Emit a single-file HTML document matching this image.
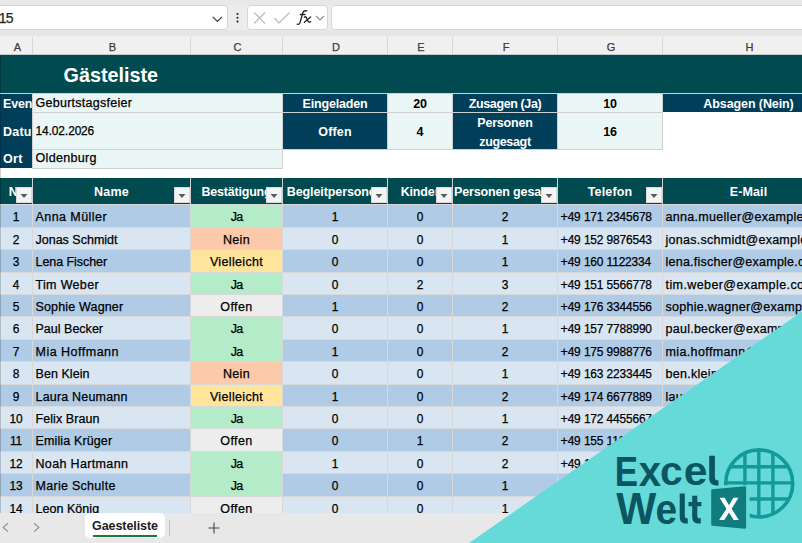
<!DOCTYPE html>
<html><head><meta charset="utf-8"><style>
html,body{margin:0;padding:0;}
body{width:802px;height:543px;overflow:hidden;position:relative;font-family:"Liberation Sans", sans-serif;background:#fff;}
.d{font-size:11.9px;}
.t{-webkit-text-stroke:0.25px currentColor;}
</style></head><body>
<div style="position:absolute;left:0px;top:0px;width:802px;height:36px;background:#ececec;"></div>
<div style="position:absolute;left:0px;top:0px;width:802px;height:5px;background:#e8e8e8;"></div>
<div style="position:absolute;left:0px;top:30px;width:802px;height:6px;background:#e6e6e6;"></div>
<div style="position:absolute;left:-6px;top:5px;width:234px;height:24.5px;background:#ffffff;border:1px solid #d6d6d6;border-radius:4px;box-sizing:border-box;"></div>
<div style="position:absolute;left:0px;top:6px;width:226px;height:23px;overflow:hidden;"><div class="t" style="position:absolute;left:-1.2px;top:5.00px;line-height:14px;font-size:14px;font-weight:400;color:#222;white-space:nowrap;letter-spacing:-0.9px;">15</div></div>
<svg style="position:absolute;left:0;top:0" width="240" height="36" viewBox="0 0 240 36"><path d="M212.8 16.9 L217.4 21.4 L222 16.9" fill="none" stroke="#3a3a3a" stroke-width="1.3"/><circle cx="237.5" cy="14" r="1.05" fill="#222"/><circle cx="237.5" cy="17.8" r="1.05" fill="#222"/><circle cx="237.5" cy="21.6" r="1.05" fill="#222"/></svg>
<div style="position:absolute;left:247px;top:5px;width:81px;height:24.5px;background:#ffffff;border:1px solid #d6d6d6;border-radius:4px;box-sizing:border-box;"></div>
<svg style="position:absolute;left:252px;top:11px" width="16" height="14" viewBox="0 0 16 14"><path d="M2 1.5 L13 12.5 M13 1.5 L2 12.5" fill="none" stroke="#b8b8b8" stroke-width="1.2"/></svg>
<svg style="position:absolute;left:273px;top:11px" width="18" height="14" viewBox="0 0 18 14"><path d="M1.5 7 L6 12 L16.5 1.5" fill="none" stroke="#b8b8b8" stroke-width="1.2"/></svg>
<svg style="position:absolute;left:0;top:0" width="340" height="36" viewBox="0 0 340 36"><g fill="none" stroke="#262626" stroke-width="1.35" stroke-linecap="round"><path d="M297.3 24.2 C298.8 24.9 299.9 23.6 300.5 21.2 L302.6 13.4 C303.2 11.2 304.6 10.3 306.8 10.9"/><path d="M300.4 14.5 H305"/><path d="M304.2 17.2 C305.4 16.3 306.2 16.8 306.8 18.6 L307.9 21 C308.5 22.3 309.5 22.4 310.6 21.6"/><path d="M310.6 16.9 L304.4 22.3"/></g></svg>
<svg style="position:absolute;left:315px;top:15px" width="10" height="7" viewBox="0 0 10 7"><path d="M1 1 L5 5 L9 1" fill="none" stroke="#8a8a8a" stroke-width="1.1"/></svg>
<div style="position:absolute;left:331px;top:5px;width:480px;height:24.5px;background:#ffffff;border:1px solid #d6d6d6;border-radius:4px;box-sizing:border-box;"></div>
<div style="position:absolute;left:0px;top:36px;width:802px;height:19px;background:#f0f0f0;"></div>
<div style="position:absolute;left:1.5px;top:36px;width:32.0px;height:18px;overflow:hidden;"><div class="t" style="position:absolute;left:-500px;width:1032.0px;text-align:center;top:6.00px;line-height:11px;font-size:11px;font-weight:400;color:#3c3c3c;white-space:nowrap;letter-spacing:0px;">A</div></div>
<div style="position:absolute;left:32px;top:37px;width:1px;height:17px;background:#d7d7d7;"></div>
<div style="position:absolute;left:33.5px;top:36px;width:158.0px;height:18px;overflow:hidden;"><div class="t" style="position:absolute;left:-500px;width:1158.0px;text-align:center;top:6.00px;line-height:11px;font-size:11px;font-weight:400;color:#3c3c3c;white-space:nowrap;letter-spacing:0px;">B</div></div>
<div style="position:absolute;left:190px;top:37px;width:1px;height:17px;background:#d7d7d7;"></div>
<div style="position:absolute;left:191.5px;top:36px;width:92.0px;height:18px;overflow:hidden;"><div class="t" style="position:absolute;left:-500px;width:1092.0px;text-align:center;top:6.00px;line-height:11px;font-size:11px;font-weight:400;color:#3c3c3c;white-space:nowrap;letter-spacing:0px;">C</div></div>
<div style="position:absolute;left:282px;top:37px;width:1px;height:17px;background:#d7d7d7;"></div>
<div style="position:absolute;left:283.5px;top:36px;width:105.0px;height:18px;overflow:hidden;"><div class="t" style="position:absolute;left:-500px;width:1105.0px;text-align:center;top:6.00px;line-height:11px;font-size:11px;font-weight:400;color:#3c3c3c;white-space:nowrap;letter-spacing:0px;">D</div></div>
<div style="position:absolute;left:387px;top:37px;width:1px;height:17px;background:#d7d7d7;"></div>
<div style="position:absolute;left:388.5px;top:36px;width:65.0px;height:18px;overflow:hidden;"><div class="t" style="position:absolute;left:-500px;width:1065.0px;text-align:center;top:6.00px;line-height:11px;font-size:11px;font-weight:400;color:#3c3c3c;white-space:nowrap;letter-spacing:0px;">E</div></div>
<div style="position:absolute;left:452px;top:37px;width:1px;height:17px;background:#d7d7d7;"></div>
<div style="position:absolute;left:453.5px;top:36px;width:105.0px;height:18px;overflow:hidden;"><div class="t" style="position:absolute;left:-500px;width:1105.0px;text-align:center;top:6.00px;line-height:11px;font-size:11px;font-weight:400;color:#3c3c3c;white-space:nowrap;letter-spacing:0px;">F</div></div>
<div style="position:absolute;left:557px;top:37px;width:1px;height:17px;background:#d7d7d7;"></div>
<div style="position:absolute;left:558.5px;top:36px;width:105.0px;height:18px;overflow:hidden;"><div class="t" style="position:absolute;left:-500px;width:1105.0px;text-align:center;top:6.00px;line-height:11px;font-size:11px;font-weight:400;color:#3c3c3c;white-space:nowrap;letter-spacing:0px;">G</div></div>
<div style="position:absolute;left:662px;top:37px;width:1px;height:17px;background:#d7d7d7;"></div>
<div style="position:absolute;left:663.5px;top:36px;width:172.0px;height:18px;overflow:hidden;"><div class="t" style="position:absolute;left:-500px;width:1172.0px;text-align:center;top:6.00px;line-height:11px;font-size:11px;font-weight:400;color:#3c3c3c;white-space:nowrap;letter-spacing:0px;">H</div></div>
<div style="position:absolute;left:0px;top:54px;width:802px;height:1px;background:#c8c8c8;"></div>
<div style="position:absolute;left:0px;top:55px;width:802px;height:458px;background:#ffffff;"></div>
<div style="position:absolute;left:0px;top:55px;width:802px;height:38px;background:#004a50;"></div>
<div style="position:absolute;left:33px;top:55px;width:367px;height:38px;overflow:hidden;"><div class="" style="position:absolute;left:30.5px;top:11.00px;line-height:19.8px;font-size:19.8px;font-weight:700;color:#fff;white-space:nowrap;letter-spacing:0px;">Gästeliste</div></div>
<div style="position:absolute;left:0px;top:93px;width:802px;height:1px;background:#d0d0d0;"></div>
<div style="position:absolute;left:33px;top:112px;width:630px;height:1px;background:#d0d0d0;"></div>
<div style="position:absolute;left:33px;top:149px;width:630px;height:1px;background:#d0d0d0;"></div>
<div style="position:absolute;left:33px;top:168px;width:250px;height:1px;background:#d0d0d0;"></div>
<div style="position:absolute;left:0px;top:94px;width:32px;height:18px;background:#003e5a;"></div>
<div style="position:absolute;left:0px;top:94px;width:32px;height:18px;overflow:hidden;"><div class="" style="position:absolute;left:3px;top:4.00px;line-height:12.5px;font-size:12.5px;font-weight:700;color:#fff;white-space:nowrap;letter-spacing:-0.146px;">Event</div></div>
<div style="position:absolute;left:33px;top:94px;width:249px;height:18px;background:#eaf5f5;"></div>
<div style="position:absolute;left:33px;top:94px;width:249px;height:18px;overflow:hidden;"><div class="t" style="position:absolute;left:2.5px;top:3.00px;line-height:12.5px;font-size:12.5px;font-weight:400;color:#000;white-space:nowrap;letter-spacing:0.267px;">Geburtstagsfeier</div></div>
<div style="position:absolute;left:0px;top:112px;width:32px;height:37px;background:#003e5a;"></div>
<div style="position:absolute;left:0px;top:113px;width:32px;height:36px;overflow:hidden;"><div class="" style="position:absolute;left:3px;top:13.00px;line-height:12.5px;font-size:12.5px;font-weight:700;color:#fff;white-space:nowrap;letter-spacing:0.227px;">Datum</div></div>
<div style="position:absolute;left:33px;top:113px;width:249px;height:36px;background:#eaf5f5;"></div>
<div style="position:absolute;left:33px;top:113px;width:249px;height:36px;overflow:hidden;"><div class="t" style="position:absolute;left:2.5px;top:12.00px;line-height:12.5px;font-size:12.5px;font-weight:400;color:#000;white-space:nowrap;letter-spacing:-0.129px;"><span class="d">14</span>.<span class="d">02</span>.<span class="d">2026</span></div></div>
<div style="position:absolute;left:0px;top:149px;width:32px;height:19px;background:#003e5a;"></div>
<div style="position:absolute;left:0px;top:150px;width:32px;height:18px;overflow:hidden;"><div class="" style="position:absolute;left:3px;top:3.00px;line-height:12.5px;font-size:12.5px;font-weight:700;color:#fff;white-space:nowrap;letter-spacing:0.277px;">Ort</div></div>
<div style="position:absolute;left:33px;top:150px;width:249px;height:18px;background:#eaf5f5;"></div>
<div style="position:absolute;left:33px;top:150px;width:249px;height:18px;overflow:hidden;"><div class="t" style="position:absolute;left:2.5px;top:2.00px;line-height:12.5px;font-size:12.5px;font-weight:400;color:#000;white-space:nowrap;letter-spacing:0.314px;">Oldenburg</div></div>
<div style="position:absolute;left:32px;top:94px;width:1px;height:75px;background:#d0d0d0;"></div>
<div style="position:absolute;left:282px;top:94px;width:1px;height:75px;background:#d0d0d0;"></div>
<div style="position:absolute;left:283px;top:94px;width:104px;height:18px;background:#003e5a;"></div>
<div style="position:absolute;left:283px;top:94px;width:104px;height:18px;overflow:hidden;"><div class="" style="position:absolute;left:-500px;width:1104px;text-align:center;top:4.00px;line-height:12.5px;font-size:12.5px;font-weight:700;color:#fff;white-space:nowrap;letter-spacing:-0.178px;">Eingeladen</div></div>
<div style="position:absolute;left:388px;top:94px;width:64px;height:18px;background:#eaf5f5;"></div>
<div style="position:absolute;left:388px;top:94px;width:64px;height:18px;overflow:hidden;"><div class="" style="position:absolute;left:-500px;width:1064px;text-align:center;top:4.00px;line-height:12.5px;font-size:12.5px;font-weight:700;color:#000;white-space:nowrap;letter-spacing:-0.152px;">20</div></div>
<div style="position:absolute;left:453px;top:94px;width:104px;height:18px;background:#003e5a;"></div>
<div style="position:absolute;left:453px;top:94px;width:104px;height:18px;overflow:hidden;"><div class="" style="position:absolute;left:-500px;width:1104px;text-align:center;top:4.00px;line-height:12.5px;font-size:12.5px;font-weight:700;color:#fff;white-space:nowrap;letter-spacing:-0.379px;">Zusagen (Ja)</div></div>
<div style="position:absolute;left:558px;top:94px;width:104px;height:18px;background:#eaf5f5;"></div>
<div style="position:absolute;left:558px;top:94px;width:104px;height:18px;overflow:hidden;"><div class="" style="position:absolute;left:-500px;width:1104px;text-align:center;top:4.00px;line-height:12.5px;font-size:12.5px;font-weight:700;color:#000;white-space:nowrap;letter-spacing:-0.152px;">10</div></div>
<div style="position:absolute;left:663px;top:94px;width:171px;height:18px;background:#003e5a;"></div>
<div style="position:absolute;left:663px;top:94px;width:171px;height:18px;overflow:hidden;"><div class="" style="position:absolute;left:-500px;width:1171px;text-align:center;top:4.00px;line-height:12.5px;font-size:12.5px;font-weight:700;color:#fff;white-space:nowrap;letter-spacing:-0.092px;">Absagen (Nein)</div></div>
<div style="position:absolute;left:283px;top:113px;width:104px;height:36px;background:#003e5a;"></div>
<div style="position:absolute;left:283px;top:113px;width:104px;height:36px;overflow:hidden;"><div class="" style="position:absolute;left:-500px;width:1104px;text-align:center;top:13.00px;line-height:12.5px;font-size:12.5px;font-weight:700;color:#fff;white-space:nowrap;letter-spacing:0.153px;">Offen</div></div>
<div style="position:absolute;left:388px;top:113px;width:64px;height:36px;background:#eaf5f5;"></div>
<div style="position:absolute;left:388px;top:113px;width:64px;height:36px;overflow:hidden;"><div class="" style="position:absolute;left:-500px;width:1064px;text-align:center;top:13.00px;line-height:12.5px;font-size:12.5px;font-weight:700;color:#000;white-space:nowrap;letter-spacing:-0.152px;">4</div></div>
<div style="position:absolute;left:453px;top:113px;width:104px;height:36px;background:#003e5a;"></div>
<div style="position:absolute;left:453px;top:113px;width:104px;height:36px;overflow:hidden;"><div class="" style="position:absolute;left:-500px;width:1104px;text-align:center;top:4.00px;line-height:12.5px;font-size:12.5px;font-weight:700;color:#fff;white-space:nowrap;letter-spacing:-0.183px;">Personen</div></div>
<div style="position:absolute;left:453px;top:113px;width:104px;height:36px;overflow:hidden;"><div class="" style="position:absolute;left:-500px;width:1104px;text-align:center;top:23.00px;line-height:12.5px;font-size:12.5px;font-weight:700;color:#fff;white-space:nowrap;letter-spacing:-0.338px;">zugesagt</div></div>
<div style="position:absolute;left:558px;top:113px;width:104px;height:36px;background:#eaf5f5;"></div>
<div style="position:absolute;left:558px;top:113px;width:104px;height:36px;overflow:hidden;"><div class="" style="position:absolute;left:-500px;width:1104px;text-align:center;top:13.00px;line-height:12.5px;font-size:12.5px;font-weight:700;color:#000;white-space:nowrap;letter-spacing:-0.152px;">16</div></div>
<div style="position:absolute;left:282px;top:94px;width:1px;height:55px;background:#d0d0d0;"></div>
<div style="position:absolute;left:387px;top:94px;width:1px;height:55px;background:#d0d0d0;"></div>
<div style="position:absolute;left:452px;top:94px;width:1px;height:55px;background:#d0d0d0;"></div>
<div style="position:absolute;left:557px;top:94px;width:1px;height:55px;background:#d0d0d0;"></div>
<div style="position:absolute;left:662px;top:94px;width:1px;height:55px;background:#d0d0d0;"></div>
<div style="position:absolute;left:0px;top:178px;width:802px;height:26px;background:#004a50;"></div>
<div style="position:absolute;left:0px;top:178px;width:32px;height:26px;overflow:hidden;"><div class="" style="position:absolute;left:-500px;width:1032px;text-align:center;top:8.00px;line-height:12.5px;font-size:12.5px;font-weight:700;color:#fff;white-space:nowrap;letter-spacing:0.258px;">Nr</div></div>
<div style="position:absolute;left:16px;top:187px;width:16px;height:16px;background:#f3f5f7;border:1px solid #d8dadc;box-sizing:border-box;"></div>
<svg style="position:absolute;left:16px;top:187px" width="16" height="16" viewBox="0 0 16 16"><path d="M4.5 7 L11.5 7 L8 11 Z" fill="#595959"/></svg>
<div style="position:absolute;left:32px;top:178px;width:1px;height:26px;background:#d0d0d0;"></div>
<div style="position:absolute;left:33px;top:178px;width:157px;height:26px;overflow:hidden;"><div class="" style="position:absolute;left:-500px;width:1157px;text-align:center;top:8.00px;line-height:12.5px;font-size:12.5px;font-weight:700;color:#fff;white-space:nowrap;letter-spacing:0.261px;">Name</div></div>
<div style="position:absolute;left:174px;top:187px;width:16px;height:16px;background:#f3f5f7;border:1px solid #d8dadc;box-sizing:border-box;"></div>
<svg style="position:absolute;left:174px;top:187px" width="16" height="16" viewBox="0 0 16 16"><path d="M4.5 7 L11.5 7 L8 11 Z" fill="#595959"/></svg>
<div style="position:absolute;left:190px;top:178px;width:1px;height:26px;background:#d0d0d0;"></div>
<div style="position:absolute;left:191px;top:178px;width:91px;height:26px;overflow:hidden;"><div class="" style="position:absolute;left:-500px;width:1091px;text-align:center;top:8.00px;line-height:12.5px;font-size:12.5px;font-weight:700;color:#fff;white-space:nowrap;letter-spacing:-0.216px;">Bestätigung</div></div>
<div style="position:absolute;left:266px;top:187px;width:16px;height:16px;background:#f3f5f7;border:1px solid #d8dadc;box-sizing:border-box;"></div>
<svg style="position:absolute;left:266px;top:187px" width="16" height="16" viewBox="0 0 16 16"><path d="M4.5 7 L11.5 7 L8 11 Z" fill="#595959"/></svg>
<div style="position:absolute;left:282px;top:178px;width:1px;height:26px;background:#d0d0d0;"></div>
<div style="position:absolute;left:283px;top:178px;width:104px;height:26px;overflow:hidden;"><div class="" style="position:absolute;left:-500px;width:1104px;text-align:center;top:8.00px;line-height:12.5px;font-size:12.5px;font-weight:700;color:#fff;white-space:nowrap;letter-spacing:-0.091px;">Begleitpersonen</div></div>
<div style="position:absolute;left:371px;top:187px;width:16px;height:16px;background:#f3f5f7;border:1px solid #d8dadc;box-sizing:border-box;"></div>
<svg style="position:absolute;left:371px;top:187px" width="16" height="16" viewBox="0 0 16 16"><path d="M4.5 7 L11.5 7 L8 11 Z" fill="#595959"/></svg>
<div style="position:absolute;left:387px;top:178px;width:1px;height:26px;background:#d0d0d0;"></div>
<div style="position:absolute;left:388px;top:178px;width:64px;height:26px;overflow:hidden;"><div class="" style="position:absolute;left:-500px;width:1064px;text-align:center;top:8.00px;line-height:12.5px;font-size:12.5px;font-weight:700;color:#fff;white-space:nowrap;letter-spacing:-0.146px;">Kinder</div></div>
<div style="position:absolute;left:436px;top:187px;width:16px;height:16px;background:#f3f5f7;border:1px solid #d8dadc;box-sizing:border-box;"></div>
<svg style="position:absolute;left:436px;top:187px" width="16" height="16" viewBox="0 0 16 16"><path d="M4.5 7 L11.5 7 L8 11 Z" fill="#595959"/></svg>
<div style="position:absolute;left:452px;top:178px;width:1px;height:26px;background:#d0d0d0;"></div>
<div style="position:absolute;left:453px;top:178px;width:104px;height:26px;overflow:hidden;"><div class="" style="position:absolute;left:-500px;width:1104px;text-align:center;top:8.00px;line-height:12.5px;font-size:12.5px;font-weight:700;color:#fff;white-space:nowrap;letter-spacing:-0.15px;">Personen gesamt</div></div>
<div style="position:absolute;left:541px;top:187px;width:16px;height:16px;background:#f3f5f7;border:1px solid #d8dadc;box-sizing:border-box;"></div>
<svg style="position:absolute;left:541px;top:187px" width="16" height="16" viewBox="0 0 16 16"><path d="M4.5 7 L11.5 7 L8 11 Z" fill="#595959"/></svg>
<div style="position:absolute;left:557px;top:178px;width:1px;height:26px;background:#d0d0d0;"></div>
<div style="position:absolute;left:558px;top:178px;width:104px;height:26px;overflow:hidden;"><div class="" style="position:absolute;left:-500px;width:1104px;text-align:center;top:8.00px;line-height:12.5px;font-size:12.5px;font-weight:700;color:#fff;white-space:nowrap;letter-spacing:0.165px;">Telefon</div></div>
<div style="position:absolute;left:646px;top:187px;width:16px;height:16px;background:#f3f5f7;border:1px solid #d8dadc;box-sizing:border-box;"></div>
<svg style="position:absolute;left:646px;top:187px" width="16" height="16" viewBox="0 0 16 16"><path d="M4.5 7 L11.5 7 L8 11 Z" fill="#595959"/></svg>
<div style="position:absolute;left:662px;top:178px;width:1px;height:26px;background:#d0d0d0;"></div>
<div style="position:absolute;left:663px;top:178px;width:171px;height:26px;overflow:hidden;"><div class="" style="position:absolute;left:-500px;width:1171px;text-align:center;top:8.00px;line-height:12.5px;font-size:12.5px;font-weight:700;color:#fff;white-space:nowrap;letter-spacing:0.151px;">E-Mail</div></div>
<div style="position:absolute;left:0px;top:204px;width:802px;height:1px;background:#d8d8d8;"></div>
<div style="position:absolute;left:0px;top:205px;width:802px;height:22px;background:#b0cbe5;"></div>
<div style="position:absolute;left:0px;top:227px;width:802px;height:1px;background:#d8d8d8;"></div>
<div style="position:absolute;left:32px;top:205px;width:1px;height:22px;background:#d8d8d8;"></div>
<div style="position:absolute;left:190px;top:205px;width:1px;height:22px;background:#d8d8d8;"></div>
<div style="position:absolute;left:282px;top:205px;width:1px;height:22px;background:#d8d8d8;"></div>
<div style="position:absolute;left:387px;top:205px;width:1px;height:22px;background:#d8d8d8;"></div>
<div style="position:absolute;left:452px;top:205px;width:1px;height:22px;background:#d8d8d8;"></div>
<div style="position:absolute;left:557px;top:205px;width:1px;height:22px;background:#d8d8d8;"></div>
<div style="position:absolute;left:662px;top:205px;width:1px;height:22px;background:#d8d8d8;"></div>
<div style="position:absolute;left:0px;top:205px;width:32px;height:22px;overflow:hidden;"><div class="t" style="position:absolute;left:-500px;width:1032px;text-align:center;top:6.00px;line-height:12.5px;font-size:12.5px;font-weight:400;color:#000;white-space:nowrap;letter-spacing:-0.168px;"><span class="d">1</span></div></div>
<div style="position:absolute;left:33px;top:205px;width:157px;height:22px;overflow:hidden;"><div class="t" style="position:absolute;left:2.5px;top:6.00px;line-height:12.5px;font-size:12.5px;font-weight:400;color:#000;white-space:nowrap;letter-spacing:0.434px;">Anna Müller</div></div>
<div style="position:absolute;left:191px;top:205px;width:91px;height:22px;background:#b4ecca;"></div>
<div style="position:absolute;left:191px;top:205px;width:91px;height:22px;overflow:hidden;"><div class="t" style="position:absolute;left:-500px;width:1091px;text-align:center;top:6.00px;line-height:12.5px;font-size:12.5px;font-weight:400;color:#000;white-space:nowrap;letter-spacing:-0.936px;">Ja</div></div>
<div style="position:absolute;left:283px;top:205px;width:104px;height:22px;overflow:hidden;"><div class="t" style="position:absolute;left:-500px;width:1104px;text-align:center;top:6.00px;line-height:12.5px;font-size:12.5px;font-weight:400;color:#000;white-space:nowrap;letter-spacing:-0.168px;"><span class="d">1</span></div></div>
<div style="position:absolute;left:388px;top:205px;width:64px;height:22px;overflow:hidden;"><div class="t" style="position:absolute;left:-500px;width:1064px;text-align:center;top:6.00px;line-height:12.5px;font-size:12.5px;font-weight:400;color:#000;white-space:nowrap;letter-spacing:-0.168px;"><span class="d">0</span></div></div>
<div style="position:absolute;left:453px;top:205px;width:104px;height:22px;overflow:hidden;"><div class="t" style="position:absolute;left:-500px;width:1104px;text-align:center;top:6.00px;line-height:12.5px;font-size:12.5px;font-weight:400;color:#000;white-space:nowrap;letter-spacing:-0.168px;"><span class="d">2</span></div></div>
<div style="position:absolute;left:558px;top:205px;width:104px;height:22px;overflow:hidden;"><div class="t" style="position:absolute;left:2.5px;top:6.00px;line-height:12.5px;font-size:12.5px;font-weight:400;color:#000;white-space:nowrap;letter-spacing:-0.159px;">+<span class="d">49</span> <span class="d">171</span> <span class="d">2345678</span></div></div>
<div style="position:absolute;left:663px;top:205px;width:171px;height:22px;overflow:hidden;"><div class="t" style="position:absolute;left:2.5px;top:6.00px;line-height:12.5px;font-size:12.5px;font-weight:400;color:#000;white-space:nowrap;letter-spacing:0.305px;">anna.mueller@example.com</div></div>
<div style="position:absolute;left:0px;top:228px;width:802px;height:21px;background:#d9e6f2;"></div>
<div style="position:absolute;left:0px;top:249px;width:802px;height:1px;background:#d8d8d8;"></div>
<div style="position:absolute;left:32px;top:228px;width:1px;height:21px;background:#d8d8d8;"></div>
<div style="position:absolute;left:190px;top:228px;width:1px;height:21px;background:#d8d8d8;"></div>
<div style="position:absolute;left:282px;top:228px;width:1px;height:21px;background:#d8d8d8;"></div>
<div style="position:absolute;left:387px;top:228px;width:1px;height:21px;background:#d8d8d8;"></div>
<div style="position:absolute;left:452px;top:228px;width:1px;height:21px;background:#d8d8d8;"></div>
<div style="position:absolute;left:557px;top:228px;width:1px;height:21px;background:#d8d8d8;"></div>
<div style="position:absolute;left:662px;top:228px;width:1px;height:21px;background:#d8d8d8;"></div>
<div style="position:absolute;left:0px;top:228px;width:32px;height:21px;overflow:hidden;"><div class="t" style="position:absolute;left:-500px;width:1032px;text-align:center;top:6.00px;line-height:12.5px;font-size:12.5px;font-weight:400;color:#000;white-space:nowrap;letter-spacing:-0.168px;"><span class="d">2</span></div></div>
<div style="position:absolute;left:33px;top:228px;width:157px;height:21px;overflow:hidden;"><div class="t" style="position:absolute;left:2.5px;top:6.00px;line-height:12.5px;font-size:12.5px;font-weight:400;color:#000;white-space:nowrap;letter-spacing:0.004px;">Jonas Schmidt</div></div>
<div style="position:absolute;left:191px;top:228px;width:91px;height:21px;background:#fcc9aa;"></div>
<div style="position:absolute;left:191px;top:228px;width:91px;height:21px;overflow:hidden;"><div class="t" style="position:absolute;left:-500px;width:1091px;text-align:center;top:6.00px;line-height:12.5px;font-size:12.5px;font-weight:400;color:#000;white-space:nowrap;letter-spacing:0.311px;">Nein</div></div>
<div style="position:absolute;left:283px;top:228px;width:104px;height:21px;overflow:hidden;"><div class="t" style="position:absolute;left:-500px;width:1104px;text-align:center;top:6.00px;line-height:12.5px;font-size:12.5px;font-weight:400;color:#000;white-space:nowrap;letter-spacing:-0.168px;"><span class="d">0</span></div></div>
<div style="position:absolute;left:388px;top:228px;width:64px;height:21px;overflow:hidden;"><div class="t" style="position:absolute;left:-500px;width:1064px;text-align:center;top:6.00px;line-height:12.5px;font-size:12.5px;font-weight:400;color:#000;white-space:nowrap;letter-spacing:-0.168px;"><span class="d">0</span></div></div>
<div style="position:absolute;left:453px;top:228px;width:104px;height:21px;overflow:hidden;"><div class="t" style="position:absolute;left:-500px;width:1104px;text-align:center;top:6.00px;line-height:12.5px;font-size:12.5px;font-weight:400;color:#000;white-space:nowrap;letter-spacing:-0.168px;"><span class="d">1</span></div></div>
<div style="position:absolute;left:558px;top:228px;width:104px;height:21px;overflow:hidden;"><div class="t" style="position:absolute;left:2.5px;top:6.00px;line-height:12.5px;font-size:12.5px;font-weight:400;color:#000;white-space:nowrap;letter-spacing:-0.159px;">+<span class="d">49</span> <span class="d">152</span> <span class="d">9876543</span></div></div>
<div style="position:absolute;left:663px;top:228px;width:171px;height:21px;overflow:hidden;"><div class="t" style="position:absolute;left:2.5px;top:6.00px;line-height:12.5px;font-size:12.5px;font-weight:400;color:#000;white-space:nowrap;letter-spacing:0.271px;">jonas.schmidt@example.com</div></div>
<div style="position:absolute;left:0px;top:250px;width:802px;height:22px;background:#b0cbe5;"></div>
<div style="position:absolute;left:0px;top:272px;width:802px;height:1px;background:#d8d8d8;"></div>
<div style="position:absolute;left:32px;top:250px;width:1px;height:22px;background:#d8d8d8;"></div>
<div style="position:absolute;left:190px;top:250px;width:1px;height:22px;background:#d8d8d8;"></div>
<div style="position:absolute;left:282px;top:250px;width:1px;height:22px;background:#d8d8d8;"></div>
<div style="position:absolute;left:387px;top:250px;width:1px;height:22px;background:#d8d8d8;"></div>
<div style="position:absolute;left:452px;top:250px;width:1px;height:22px;background:#d8d8d8;"></div>
<div style="position:absolute;left:557px;top:250px;width:1px;height:22px;background:#d8d8d8;"></div>
<div style="position:absolute;left:662px;top:250px;width:1px;height:22px;background:#d8d8d8;"></div>
<div style="position:absolute;left:0px;top:250px;width:32px;height:22px;overflow:hidden;"><div class="t" style="position:absolute;left:-500px;width:1032px;text-align:center;top:6.00px;line-height:12.5px;font-size:12.5px;font-weight:400;color:#000;white-space:nowrap;letter-spacing:-0.168px;"><span class="d">3</span></div></div>
<div style="position:absolute;left:33px;top:250px;width:157px;height:22px;overflow:hidden;"><div class="t" style="position:absolute;left:2.5px;top:6.00px;line-height:12.5px;font-size:12.5px;font-weight:400;color:#000;white-space:nowrap;letter-spacing:-0.062px;">Lena Fischer</div></div>
<div style="position:absolute;left:191px;top:250px;width:91px;height:22px;background:#ffe59b;"></div>
<div style="position:absolute;left:191px;top:250px;width:91px;height:22px;overflow:hidden;"><div class="t" style="position:absolute;left:-500px;width:1091px;text-align:center;top:6.00px;line-height:12.5px;font-size:12.5px;font-weight:400;color:#000;white-space:nowrap;letter-spacing:0.342px;">Vielleicht</div></div>
<div style="position:absolute;left:283px;top:250px;width:104px;height:22px;overflow:hidden;"><div class="t" style="position:absolute;left:-500px;width:1104px;text-align:center;top:6.00px;line-height:12.5px;font-size:12.5px;font-weight:400;color:#000;white-space:nowrap;letter-spacing:-0.168px;"><span class="d">0</span></div></div>
<div style="position:absolute;left:388px;top:250px;width:64px;height:22px;overflow:hidden;"><div class="t" style="position:absolute;left:-500px;width:1064px;text-align:center;top:6.00px;line-height:12.5px;font-size:12.5px;font-weight:400;color:#000;white-space:nowrap;letter-spacing:-0.168px;"><span class="d">0</span></div></div>
<div style="position:absolute;left:453px;top:250px;width:104px;height:22px;overflow:hidden;"><div class="t" style="position:absolute;left:-500px;width:1104px;text-align:center;top:6.00px;line-height:12.5px;font-size:12.5px;font-weight:400;color:#000;white-space:nowrap;letter-spacing:-0.168px;"><span class="d">1</span></div></div>
<div style="position:absolute;left:558px;top:250px;width:104px;height:22px;overflow:hidden;"><div class="t" style="position:absolute;left:2.5px;top:6.00px;line-height:12.5px;font-size:12.5px;font-weight:400;color:#000;white-space:nowrap;letter-spacing:-0.159px;">+<span class="d">49</span> <span class="d">160</span> <span class="d">1122334</span></div></div>
<div style="position:absolute;left:663px;top:250px;width:171px;height:22px;overflow:hidden;"><div class="t" style="position:absolute;left:2.5px;top:6.00px;line-height:12.5px;font-size:12.5px;font-weight:400;color:#000;white-space:nowrap;letter-spacing:0.248px;">lena.fischer@example.com</div></div>
<div style="position:absolute;left:0px;top:273px;width:802px;height:21px;background:#d9e6f2;"></div>
<div style="position:absolute;left:0px;top:294px;width:802px;height:1px;background:#d8d8d8;"></div>
<div style="position:absolute;left:32px;top:273px;width:1px;height:21px;background:#d8d8d8;"></div>
<div style="position:absolute;left:190px;top:273px;width:1px;height:21px;background:#d8d8d8;"></div>
<div style="position:absolute;left:282px;top:273px;width:1px;height:21px;background:#d8d8d8;"></div>
<div style="position:absolute;left:387px;top:273px;width:1px;height:21px;background:#d8d8d8;"></div>
<div style="position:absolute;left:452px;top:273px;width:1px;height:21px;background:#d8d8d8;"></div>
<div style="position:absolute;left:557px;top:273px;width:1px;height:21px;background:#d8d8d8;"></div>
<div style="position:absolute;left:662px;top:273px;width:1px;height:21px;background:#d8d8d8;"></div>
<div style="position:absolute;left:0px;top:273px;width:32px;height:21px;overflow:hidden;"><div class="t" style="position:absolute;left:-500px;width:1032px;text-align:center;top:6.00px;line-height:12.5px;font-size:12.5px;font-weight:400;color:#000;white-space:nowrap;letter-spacing:-0.168px;"><span class="d">4</span></div></div>
<div style="position:absolute;left:33px;top:273px;width:157px;height:21px;overflow:hidden;"><div class="t" style="position:absolute;left:2.5px;top:6.00px;line-height:12.5px;font-size:12.5px;font-weight:400;color:#000;white-space:nowrap;letter-spacing:0.331px;">Tim Weber</div></div>
<div style="position:absolute;left:191px;top:273px;width:91px;height:21px;background:#b4ecca;"></div>
<div style="position:absolute;left:191px;top:273px;width:91px;height:21px;overflow:hidden;"><div class="t" style="position:absolute;left:-500px;width:1091px;text-align:center;top:6.00px;line-height:12.5px;font-size:12.5px;font-weight:400;color:#000;white-space:nowrap;letter-spacing:-0.936px;">Ja</div></div>
<div style="position:absolute;left:283px;top:273px;width:104px;height:21px;overflow:hidden;"><div class="t" style="position:absolute;left:-500px;width:1104px;text-align:center;top:6.00px;line-height:12.5px;font-size:12.5px;font-weight:400;color:#000;white-space:nowrap;letter-spacing:-0.168px;"><span class="d">0</span></div></div>
<div style="position:absolute;left:388px;top:273px;width:64px;height:21px;overflow:hidden;"><div class="t" style="position:absolute;left:-500px;width:1064px;text-align:center;top:6.00px;line-height:12.5px;font-size:12.5px;font-weight:400;color:#000;white-space:nowrap;letter-spacing:-0.168px;"><span class="d">2</span></div></div>
<div style="position:absolute;left:453px;top:273px;width:104px;height:21px;overflow:hidden;"><div class="t" style="position:absolute;left:-500px;width:1104px;text-align:center;top:6.00px;line-height:12.5px;font-size:12.5px;font-weight:400;color:#000;white-space:nowrap;letter-spacing:-0.168px;"><span class="d">3</span></div></div>
<div style="position:absolute;left:558px;top:273px;width:104px;height:21px;overflow:hidden;"><div class="t" style="position:absolute;left:2.5px;top:6.00px;line-height:12.5px;font-size:12.5px;font-weight:400;color:#000;white-space:nowrap;letter-spacing:-0.159px;">+<span class="d">49</span> <span class="d">151</span> <span class="d">5566778</span></div></div>
<div style="position:absolute;left:663px;top:273px;width:171px;height:21px;overflow:hidden;"><div class="t" style="position:absolute;left:2.5px;top:6.00px;line-height:12.5px;font-size:12.5px;font-weight:400;color:#000;white-space:nowrap;letter-spacing:0.406px;">tim.weber@example.com</div></div>
<div style="position:absolute;left:0px;top:295px;width:802px;height:21px;background:#b0cbe5;"></div>
<div style="position:absolute;left:0px;top:316px;width:802px;height:1px;background:#d8d8d8;"></div>
<div style="position:absolute;left:32px;top:295px;width:1px;height:21px;background:#d8d8d8;"></div>
<div style="position:absolute;left:190px;top:295px;width:1px;height:21px;background:#d8d8d8;"></div>
<div style="position:absolute;left:282px;top:295px;width:1px;height:21px;background:#d8d8d8;"></div>
<div style="position:absolute;left:387px;top:295px;width:1px;height:21px;background:#d8d8d8;"></div>
<div style="position:absolute;left:452px;top:295px;width:1px;height:21px;background:#d8d8d8;"></div>
<div style="position:absolute;left:557px;top:295px;width:1px;height:21px;background:#d8d8d8;"></div>
<div style="position:absolute;left:662px;top:295px;width:1px;height:21px;background:#d8d8d8;"></div>
<div style="position:absolute;left:0px;top:295px;width:32px;height:21px;overflow:hidden;"><div class="t" style="position:absolute;left:-500px;width:1032px;text-align:center;top:6.00px;line-height:12.5px;font-size:12.5px;font-weight:400;color:#000;white-space:nowrap;letter-spacing:-0.168px;"><span class="d">5</span></div></div>
<div style="position:absolute;left:33px;top:295px;width:157px;height:21px;overflow:hidden;"><div class="t" style="position:absolute;left:2.5px;top:6.00px;line-height:12.5px;font-size:12.5px;font-weight:400;color:#000;white-space:nowrap;letter-spacing:0.161px;">Sophie Wagner</div></div>
<div style="position:absolute;left:191px;top:295px;width:91px;height:21px;background:#ededed;"></div>
<div style="position:absolute;left:191px;top:295px;width:91px;height:21px;overflow:hidden;"><div class="t" style="position:absolute;left:-500px;width:1091px;text-align:center;top:6.00px;line-height:12.5px;font-size:12.5px;font-weight:400;color:#000;white-space:nowrap;letter-spacing:0.404px;">Offen</div></div>
<div style="position:absolute;left:283px;top:295px;width:104px;height:21px;overflow:hidden;"><div class="t" style="position:absolute;left:-500px;width:1104px;text-align:center;top:6.00px;line-height:12.5px;font-size:12.5px;font-weight:400;color:#000;white-space:nowrap;letter-spacing:-0.168px;"><span class="d">1</span></div></div>
<div style="position:absolute;left:388px;top:295px;width:64px;height:21px;overflow:hidden;"><div class="t" style="position:absolute;left:-500px;width:1064px;text-align:center;top:6.00px;line-height:12.5px;font-size:12.5px;font-weight:400;color:#000;white-space:nowrap;letter-spacing:-0.168px;"><span class="d">0</span></div></div>
<div style="position:absolute;left:453px;top:295px;width:104px;height:21px;overflow:hidden;"><div class="t" style="position:absolute;left:-500px;width:1104px;text-align:center;top:6.00px;line-height:12.5px;font-size:12.5px;font-weight:400;color:#000;white-space:nowrap;letter-spacing:-0.168px;"><span class="d">2</span></div></div>
<div style="position:absolute;left:558px;top:295px;width:104px;height:21px;overflow:hidden;"><div class="t" style="position:absolute;left:2.5px;top:6.00px;line-height:12.5px;font-size:12.5px;font-weight:400;color:#000;white-space:nowrap;letter-spacing:-0.159px;">+<span class="d">49</span> <span class="d">176</span> <span class="d">3344556</span></div></div>
<div style="position:absolute;left:663px;top:295px;width:171px;height:21px;overflow:hidden;"><div class="t" style="position:absolute;left:2.5px;top:6.00px;line-height:12.5px;font-size:12.5px;font-weight:400;color:#000;white-space:nowrap;letter-spacing:0.27px;">sophie.wagner@example.com</div></div>
<div style="position:absolute;left:0px;top:317px;width:802px;height:22px;background:#d9e6f2;"></div>
<div style="position:absolute;left:0px;top:339px;width:802px;height:1px;background:#d8d8d8;"></div>
<div style="position:absolute;left:32px;top:317px;width:1px;height:22px;background:#d8d8d8;"></div>
<div style="position:absolute;left:190px;top:317px;width:1px;height:22px;background:#d8d8d8;"></div>
<div style="position:absolute;left:282px;top:317px;width:1px;height:22px;background:#d8d8d8;"></div>
<div style="position:absolute;left:387px;top:317px;width:1px;height:22px;background:#d8d8d8;"></div>
<div style="position:absolute;left:452px;top:317px;width:1px;height:22px;background:#d8d8d8;"></div>
<div style="position:absolute;left:557px;top:317px;width:1px;height:22px;background:#d8d8d8;"></div>
<div style="position:absolute;left:662px;top:317px;width:1px;height:22px;background:#d8d8d8;"></div>
<div style="position:absolute;left:0px;top:317px;width:32px;height:22px;overflow:hidden;"><div class="t" style="position:absolute;left:-500px;width:1032px;text-align:center;top:6.00px;line-height:12.5px;font-size:12.5px;font-weight:400;color:#000;white-space:nowrap;letter-spacing:-0.168px;"><span class="d">6</span></div></div>
<div style="position:absolute;left:33px;top:317px;width:157px;height:22px;overflow:hidden;"><div class="t" style="position:absolute;left:2.5px;top:6.00px;line-height:12.5px;font-size:12.5px;font-weight:400;color:#000;white-space:nowrap;letter-spacing:0.011px;">Paul Becker</div></div>
<div style="position:absolute;left:191px;top:317px;width:91px;height:22px;background:#b4ecca;"></div>
<div style="position:absolute;left:191px;top:317px;width:91px;height:22px;overflow:hidden;"><div class="t" style="position:absolute;left:-500px;width:1091px;text-align:center;top:6.00px;line-height:12.5px;font-size:12.5px;font-weight:400;color:#000;white-space:nowrap;letter-spacing:-0.936px;">Ja</div></div>
<div style="position:absolute;left:283px;top:317px;width:104px;height:22px;overflow:hidden;"><div class="t" style="position:absolute;left:-500px;width:1104px;text-align:center;top:6.00px;line-height:12.5px;font-size:12.5px;font-weight:400;color:#000;white-space:nowrap;letter-spacing:-0.168px;"><span class="d">0</span></div></div>
<div style="position:absolute;left:388px;top:317px;width:64px;height:22px;overflow:hidden;"><div class="t" style="position:absolute;left:-500px;width:1064px;text-align:center;top:6.00px;line-height:12.5px;font-size:12.5px;font-weight:400;color:#000;white-space:nowrap;letter-spacing:-0.168px;"><span class="d">0</span></div></div>
<div style="position:absolute;left:453px;top:317px;width:104px;height:22px;overflow:hidden;"><div class="t" style="position:absolute;left:-500px;width:1104px;text-align:center;top:6.00px;line-height:12.5px;font-size:12.5px;font-weight:400;color:#000;white-space:nowrap;letter-spacing:-0.168px;"><span class="d">1</span></div></div>
<div style="position:absolute;left:558px;top:317px;width:104px;height:22px;overflow:hidden;"><div class="t" style="position:absolute;left:2.5px;top:6.00px;line-height:12.5px;font-size:12.5px;font-weight:400;color:#000;white-space:nowrap;letter-spacing:-0.159px;">+<span class="d">49</span> <span class="d">157</span> <span class="d">7788990</span></div></div>
<div style="position:absolute;left:663px;top:317px;width:171px;height:22px;overflow:hidden;"><div class="t" style="position:absolute;left:2.5px;top:6.00px;line-height:12.5px;font-size:12.5px;font-weight:400;color:#000;white-space:nowrap;letter-spacing:0.261px;">paul.becker@example.com</div></div>
<div style="position:absolute;left:0px;top:340px;width:802px;height:21px;background:#b0cbe5;"></div>
<div style="position:absolute;left:0px;top:361px;width:802px;height:1px;background:#d8d8d8;"></div>
<div style="position:absolute;left:32px;top:340px;width:1px;height:21px;background:#d8d8d8;"></div>
<div style="position:absolute;left:190px;top:340px;width:1px;height:21px;background:#d8d8d8;"></div>
<div style="position:absolute;left:282px;top:340px;width:1px;height:21px;background:#d8d8d8;"></div>
<div style="position:absolute;left:387px;top:340px;width:1px;height:21px;background:#d8d8d8;"></div>
<div style="position:absolute;left:452px;top:340px;width:1px;height:21px;background:#d8d8d8;"></div>
<div style="position:absolute;left:557px;top:340px;width:1px;height:21px;background:#d8d8d8;"></div>
<div style="position:absolute;left:662px;top:340px;width:1px;height:21px;background:#d8d8d8;"></div>
<div style="position:absolute;left:0px;top:340px;width:32px;height:21px;overflow:hidden;"><div class="t" style="position:absolute;left:-500px;width:1032px;text-align:center;top:6.00px;line-height:12.5px;font-size:12.5px;font-weight:400;color:#000;white-space:nowrap;letter-spacing:-0.168px;"><span class="d">7</span></div></div>
<div style="position:absolute;left:33px;top:340px;width:157px;height:21px;overflow:hidden;"><div class="t" style="position:absolute;left:2.5px;top:6.00px;line-height:12.5px;font-size:12.5px;font-weight:400;color:#000;white-space:nowrap;letter-spacing:0.489px;">Mia Hoffmann</div></div>
<div style="position:absolute;left:191px;top:340px;width:91px;height:21px;background:#b4ecca;"></div>
<div style="position:absolute;left:191px;top:340px;width:91px;height:21px;overflow:hidden;"><div class="t" style="position:absolute;left:-500px;width:1091px;text-align:center;top:6.00px;line-height:12.5px;font-size:12.5px;font-weight:400;color:#000;white-space:nowrap;letter-spacing:-0.936px;">Ja</div></div>
<div style="position:absolute;left:283px;top:340px;width:104px;height:21px;overflow:hidden;"><div class="t" style="position:absolute;left:-500px;width:1104px;text-align:center;top:6.00px;line-height:12.5px;font-size:12.5px;font-weight:400;color:#000;white-space:nowrap;letter-spacing:-0.168px;"><span class="d">1</span></div></div>
<div style="position:absolute;left:388px;top:340px;width:64px;height:21px;overflow:hidden;"><div class="t" style="position:absolute;left:-500px;width:1064px;text-align:center;top:6.00px;line-height:12.5px;font-size:12.5px;font-weight:400;color:#000;white-space:nowrap;letter-spacing:-0.168px;"><span class="d">0</span></div></div>
<div style="position:absolute;left:453px;top:340px;width:104px;height:21px;overflow:hidden;"><div class="t" style="position:absolute;left:-500px;width:1104px;text-align:center;top:6.00px;line-height:12.5px;font-size:12.5px;font-weight:400;color:#000;white-space:nowrap;letter-spacing:-0.168px;"><span class="d">2</span></div></div>
<div style="position:absolute;left:558px;top:340px;width:104px;height:21px;overflow:hidden;"><div class="t" style="position:absolute;left:2.5px;top:6.00px;line-height:12.5px;font-size:12.5px;font-weight:400;color:#000;white-space:nowrap;letter-spacing:-0.159px;">+<span class="d">49</span> <span class="d">175</span> <span class="d">9988776</span></div></div>
<div style="position:absolute;left:663px;top:340px;width:171px;height:21px;overflow:hidden;"><div class="t" style="position:absolute;left:2.5px;top:6.00px;line-height:12.5px;font-size:12.5px;font-weight:400;color:#000;white-space:nowrap;letter-spacing:0.375px;">mia.hoffmann@example.com</div></div>
<div style="position:absolute;left:0px;top:362px;width:802px;height:22px;background:#d9e6f2;"></div>
<div style="position:absolute;left:0px;top:384px;width:802px;height:1px;background:#d8d8d8;"></div>
<div style="position:absolute;left:32px;top:362px;width:1px;height:22px;background:#d8d8d8;"></div>
<div style="position:absolute;left:190px;top:362px;width:1px;height:22px;background:#d8d8d8;"></div>
<div style="position:absolute;left:282px;top:362px;width:1px;height:22px;background:#d8d8d8;"></div>
<div style="position:absolute;left:387px;top:362px;width:1px;height:22px;background:#d8d8d8;"></div>
<div style="position:absolute;left:452px;top:362px;width:1px;height:22px;background:#d8d8d8;"></div>
<div style="position:absolute;left:557px;top:362px;width:1px;height:22px;background:#d8d8d8;"></div>
<div style="position:absolute;left:662px;top:362px;width:1px;height:22px;background:#d8d8d8;"></div>
<div style="position:absolute;left:0px;top:362px;width:32px;height:22px;overflow:hidden;"><div class="t" style="position:absolute;left:-500px;width:1032px;text-align:center;top:6.00px;line-height:12.5px;font-size:12.5px;font-weight:400;color:#000;white-space:nowrap;letter-spacing:-0.168px;"><span class="d">8</span></div></div>
<div style="position:absolute;left:33px;top:362px;width:157px;height:22px;overflow:hidden;"><div class="t" style="position:absolute;left:2.5px;top:6.00px;line-height:12.5px;font-size:12.5px;font-weight:400;color:#000;white-space:nowrap;letter-spacing:0.062px;">Ben Klein</div></div>
<div style="position:absolute;left:191px;top:362px;width:91px;height:22px;background:#fcc9aa;"></div>
<div style="position:absolute;left:191px;top:362px;width:91px;height:22px;overflow:hidden;"><div class="t" style="position:absolute;left:-500px;width:1091px;text-align:center;top:6.00px;line-height:12.5px;font-size:12.5px;font-weight:400;color:#000;white-space:nowrap;letter-spacing:0.311px;">Nein</div></div>
<div style="position:absolute;left:283px;top:362px;width:104px;height:22px;overflow:hidden;"><div class="t" style="position:absolute;left:-500px;width:1104px;text-align:center;top:6.00px;line-height:12.5px;font-size:12.5px;font-weight:400;color:#000;white-space:nowrap;letter-spacing:-0.168px;"><span class="d">0</span></div></div>
<div style="position:absolute;left:388px;top:362px;width:64px;height:22px;overflow:hidden;"><div class="t" style="position:absolute;left:-500px;width:1064px;text-align:center;top:6.00px;line-height:12.5px;font-size:12.5px;font-weight:400;color:#000;white-space:nowrap;letter-spacing:-0.168px;"><span class="d">0</span></div></div>
<div style="position:absolute;left:453px;top:362px;width:104px;height:22px;overflow:hidden;"><div class="t" style="position:absolute;left:-500px;width:1104px;text-align:center;top:6.00px;line-height:12.5px;font-size:12.5px;font-weight:400;color:#000;white-space:nowrap;letter-spacing:-0.168px;"><span class="d">1</span></div></div>
<div style="position:absolute;left:558px;top:362px;width:104px;height:22px;overflow:hidden;"><div class="t" style="position:absolute;left:2.5px;top:6.00px;line-height:12.5px;font-size:12.5px;font-weight:400;color:#000;white-space:nowrap;letter-spacing:-0.159px;">+<span class="d">49</span> <span class="d">163</span> <span class="d">2233445</span></div></div>
<div style="position:absolute;left:663px;top:362px;width:171px;height:22px;overflow:hidden;"><div class="t" style="position:absolute;left:2.5px;top:6.00px;line-height:12.5px;font-size:12.5px;font-weight:400;color:#000;white-space:nowrap;letter-spacing:0.291px;">ben.klein@example.com</div></div>
<div style="position:absolute;left:0px;top:385px;width:802px;height:21px;background:#b0cbe5;"></div>
<div style="position:absolute;left:0px;top:406px;width:802px;height:1px;background:#d8d8d8;"></div>
<div style="position:absolute;left:32px;top:385px;width:1px;height:21px;background:#d8d8d8;"></div>
<div style="position:absolute;left:190px;top:385px;width:1px;height:21px;background:#d8d8d8;"></div>
<div style="position:absolute;left:282px;top:385px;width:1px;height:21px;background:#d8d8d8;"></div>
<div style="position:absolute;left:387px;top:385px;width:1px;height:21px;background:#d8d8d8;"></div>
<div style="position:absolute;left:452px;top:385px;width:1px;height:21px;background:#d8d8d8;"></div>
<div style="position:absolute;left:557px;top:385px;width:1px;height:21px;background:#d8d8d8;"></div>
<div style="position:absolute;left:662px;top:385px;width:1px;height:21px;background:#d8d8d8;"></div>
<div style="position:absolute;left:0px;top:385px;width:32px;height:21px;overflow:hidden;"><div class="t" style="position:absolute;left:-500px;width:1032px;text-align:center;top:6.00px;line-height:12.5px;font-size:12.5px;font-weight:400;color:#000;white-space:nowrap;letter-spacing:-0.168px;"><span class="d">9</span></div></div>
<div style="position:absolute;left:33px;top:385px;width:157px;height:21px;overflow:hidden;"><div class="t" style="position:absolute;left:2.5px;top:6.00px;line-height:12.5px;font-size:12.5px;font-weight:400;color:#000;white-space:nowrap;letter-spacing:0.192px;">Laura Neumann</div></div>
<div style="position:absolute;left:191px;top:385px;width:91px;height:21px;background:#ffe59b;"></div>
<div style="position:absolute;left:191px;top:385px;width:91px;height:21px;overflow:hidden;"><div class="t" style="position:absolute;left:-500px;width:1091px;text-align:center;top:6.00px;line-height:12.5px;font-size:12.5px;font-weight:400;color:#000;white-space:nowrap;letter-spacing:0.342px;">Vielleicht</div></div>
<div style="position:absolute;left:283px;top:385px;width:104px;height:21px;overflow:hidden;"><div class="t" style="position:absolute;left:-500px;width:1104px;text-align:center;top:6.00px;line-height:12.5px;font-size:12.5px;font-weight:400;color:#000;white-space:nowrap;letter-spacing:-0.168px;"><span class="d">1</span></div></div>
<div style="position:absolute;left:388px;top:385px;width:64px;height:21px;overflow:hidden;"><div class="t" style="position:absolute;left:-500px;width:1064px;text-align:center;top:6.00px;line-height:12.5px;font-size:12.5px;font-weight:400;color:#000;white-space:nowrap;letter-spacing:-0.168px;"><span class="d">0</span></div></div>
<div style="position:absolute;left:453px;top:385px;width:104px;height:21px;overflow:hidden;"><div class="t" style="position:absolute;left:-500px;width:1104px;text-align:center;top:6.00px;line-height:12.5px;font-size:12.5px;font-weight:400;color:#000;white-space:nowrap;letter-spacing:-0.168px;"><span class="d">2</span></div></div>
<div style="position:absolute;left:558px;top:385px;width:104px;height:21px;overflow:hidden;"><div class="t" style="position:absolute;left:2.5px;top:6.00px;line-height:12.5px;font-size:12.5px;font-weight:400;color:#000;white-space:nowrap;letter-spacing:-0.159px;">+<span class="d">49</span> <span class="d">174</span> <span class="d">6677889</span></div></div>
<div style="position:absolute;left:663px;top:385px;width:171px;height:21px;overflow:hidden;"><div class="t" style="position:absolute;left:2.5px;top:6.00px;line-height:12.5px;font-size:12.5px;font-weight:400;color:#000;white-space:nowrap;letter-spacing:0.303px;">laura.neumann@example.com</div></div>
<div style="position:absolute;left:0px;top:407px;width:802px;height:21px;background:#d9e6f2;"></div>
<div style="position:absolute;left:0px;top:428px;width:802px;height:1px;background:#d8d8d8;"></div>
<div style="position:absolute;left:32px;top:407px;width:1px;height:21px;background:#d8d8d8;"></div>
<div style="position:absolute;left:190px;top:407px;width:1px;height:21px;background:#d8d8d8;"></div>
<div style="position:absolute;left:282px;top:407px;width:1px;height:21px;background:#d8d8d8;"></div>
<div style="position:absolute;left:387px;top:407px;width:1px;height:21px;background:#d8d8d8;"></div>
<div style="position:absolute;left:452px;top:407px;width:1px;height:21px;background:#d8d8d8;"></div>
<div style="position:absolute;left:557px;top:407px;width:1px;height:21px;background:#d8d8d8;"></div>
<div style="position:absolute;left:662px;top:407px;width:1px;height:21px;background:#d8d8d8;"></div>
<div style="position:absolute;left:0px;top:407px;width:32px;height:21px;overflow:hidden;"><div class="t" style="position:absolute;left:-500px;width:1032px;text-align:center;top:6.00px;line-height:12.5px;font-size:12.5px;font-weight:400;color:#000;white-space:nowrap;letter-spacing:-0.168px;"><span class="d">10</span></div></div>
<div style="position:absolute;left:33px;top:407px;width:157px;height:21px;overflow:hidden;"><div class="t" style="position:absolute;left:2.5px;top:6.00px;line-height:12.5px;font-size:12.5px;font-weight:400;color:#000;white-space:nowrap;letter-spacing:0.076px;">Felix Braun</div></div>
<div style="position:absolute;left:191px;top:407px;width:91px;height:21px;background:#b4ecca;"></div>
<div style="position:absolute;left:191px;top:407px;width:91px;height:21px;overflow:hidden;"><div class="t" style="position:absolute;left:-500px;width:1091px;text-align:center;top:6.00px;line-height:12.5px;font-size:12.5px;font-weight:400;color:#000;white-space:nowrap;letter-spacing:-0.936px;">Ja</div></div>
<div style="position:absolute;left:283px;top:407px;width:104px;height:21px;overflow:hidden;"><div class="t" style="position:absolute;left:-500px;width:1104px;text-align:center;top:6.00px;line-height:12.5px;font-size:12.5px;font-weight:400;color:#000;white-space:nowrap;letter-spacing:-0.168px;"><span class="d">0</span></div></div>
<div style="position:absolute;left:388px;top:407px;width:64px;height:21px;overflow:hidden;"><div class="t" style="position:absolute;left:-500px;width:1064px;text-align:center;top:6.00px;line-height:12.5px;font-size:12.5px;font-weight:400;color:#000;white-space:nowrap;letter-spacing:-0.168px;"><span class="d">0</span></div></div>
<div style="position:absolute;left:453px;top:407px;width:104px;height:21px;overflow:hidden;"><div class="t" style="position:absolute;left:-500px;width:1104px;text-align:center;top:6.00px;line-height:12.5px;font-size:12.5px;font-weight:400;color:#000;white-space:nowrap;letter-spacing:-0.168px;"><span class="d">1</span></div></div>
<div style="position:absolute;left:558px;top:407px;width:104px;height:21px;overflow:hidden;"><div class="t" style="position:absolute;left:2.5px;top:6.00px;line-height:12.5px;font-size:12.5px;font-weight:400;color:#000;white-space:nowrap;letter-spacing:-0.159px;">+<span class="d">49</span> <span class="d">172</span> <span class="d">4455667</span></div></div>
<div style="position:absolute;left:663px;top:407px;width:171px;height:21px;overflow:hidden;"><div class="t" style="position:absolute;left:2.5px;top:6.00px;line-height:12.5px;font-size:12.5px;font-weight:400;color:#000;white-space:nowrap;letter-spacing:0.312px;">felix.braun@example.com</div></div>
<div style="position:absolute;left:0px;top:429px;width:802px;height:22px;background:#b0cbe5;"></div>
<div style="position:absolute;left:0px;top:451px;width:802px;height:1px;background:#d8d8d8;"></div>
<div style="position:absolute;left:32px;top:429px;width:1px;height:22px;background:#d8d8d8;"></div>
<div style="position:absolute;left:190px;top:429px;width:1px;height:22px;background:#d8d8d8;"></div>
<div style="position:absolute;left:282px;top:429px;width:1px;height:22px;background:#d8d8d8;"></div>
<div style="position:absolute;left:387px;top:429px;width:1px;height:22px;background:#d8d8d8;"></div>
<div style="position:absolute;left:452px;top:429px;width:1px;height:22px;background:#d8d8d8;"></div>
<div style="position:absolute;left:557px;top:429px;width:1px;height:22px;background:#d8d8d8;"></div>
<div style="position:absolute;left:662px;top:429px;width:1px;height:22px;background:#d8d8d8;"></div>
<div style="position:absolute;left:0px;top:429px;width:32px;height:22px;overflow:hidden;"><div class="t" style="position:absolute;left:-500px;width:1032px;text-align:center;top:6.00px;line-height:12.5px;font-size:12.5px;font-weight:400;color:#000;white-space:nowrap;letter-spacing:-0.168px;"><span class="d">11</span></div></div>
<div style="position:absolute;left:33px;top:429px;width:157px;height:22px;overflow:hidden;"><div class="t" style="position:absolute;left:2.5px;top:6.00px;line-height:12.5px;font-size:12.5px;font-weight:400;color:#000;white-space:nowrap;letter-spacing:0.132px;">Emilia Krüger</div></div>
<div style="position:absolute;left:191px;top:429px;width:91px;height:22px;background:#ededed;"></div>
<div style="position:absolute;left:191px;top:429px;width:91px;height:22px;overflow:hidden;"><div class="t" style="position:absolute;left:-500px;width:1091px;text-align:center;top:6.00px;line-height:12.5px;font-size:12.5px;font-weight:400;color:#000;white-space:nowrap;letter-spacing:0.404px;">Offen</div></div>
<div style="position:absolute;left:283px;top:429px;width:104px;height:22px;overflow:hidden;"><div class="t" style="position:absolute;left:-500px;width:1104px;text-align:center;top:6.00px;line-height:12.5px;font-size:12.5px;font-weight:400;color:#000;white-space:nowrap;letter-spacing:-0.168px;"><span class="d">0</span></div></div>
<div style="position:absolute;left:388px;top:429px;width:64px;height:22px;overflow:hidden;"><div class="t" style="position:absolute;left:-500px;width:1064px;text-align:center;top:6.00px;line-height:12.5px;font-size:12.5px;font-weight:400;color:#000;white-space:nowrap;letter-spacing:-0.168px;"><span class="d">1</span></div></div>
<div style="position:absolute;left:453px;top:429px;width:104px;height:22px;overflow:hidden;"><div class="t" style="position:absolute;left:-500px;width:1104px;text-align:center;top:6.00px;line-height:12.5px;font-size:12.5px;font-weight:400;color:#000;white-space:nowrap;letter-spacing:-0.168px;"><span class="d">2</span></div></div>
<div style="position:absolute;left:558px;top:429px;width:104px;height:22px;overflow:hidden;"><div class="t" style="position:absolute;left:2.5px;top:6.00px;line-height:12.5px;font-size:12.5px;font-weight:400;color:#000;white-space:nowrap;letter-spacing:-0.159px;">+<span class="d">49</span> <span class="d">155</span> <span class="d">1122334</span></div></div>
<div style="position:absolute;left:663px;top:429px;width:171px;height:22px;overflow:hidden;"><div class="t" style="position:absolute;left:2.5px;top:6.00px;line-height:12.5px;font-size:12.5px;font-weight:400;color:#000;white-space:nowrap;letter-spacing:0.299px;">emilia.krueger@example.com</div></div>
<div style="position:absolute;left:0px;top:452px;width:802px;height:21px;background:#d9e6f2;"></div>
<div style="position:absolute;left:0px;top:473px;width:802px;height:1px;background:#d8d8d8;"></div>
<div style="position:absolute;left:32px;top:452px;width:1px;height:21px;background:#d8d8d8;"></div>
<div style="position:absolute;left:190px;top:452px;width:1px;height:21px;background:#d8d8d8;"></div>
<div style="position:absolute;left:282px;top:452px;width:1px;height:21px;background:#d8d8d8;"></div>
<div style="position:absolute;left:387px;top:452px;width:1px;height:21px;background:#d8d8d8;"></div>
<div style="position:absolute;left:452px;top:452px;width:1px;height:21px;background:#d8d8d8;"></div>
<div style="position:absolute;left:557px;top:452px;width:1px;height:21px;background:#d8d8d8;"></div>
<div style="position:absolute;left:662px;top:452px;width:1px;height:21px;background:#d8d8d8;"></div>
<div style="position:absolute;left:0px;top:452px;width:32px;height:21px;overflow:hidden;"><div class="t" style="position:absolute;left:-500px;width:1032px;text-align:center;top:6.00px;line-height:12.5px;font-size:12.5px;font-weight:400;color:#000;white-space:nowrap;letter-spacing:-0.168px;"><span class="d">12</span></div></div>
<div style="position:absolute;left:33px;top:452px;width:157px;height:21px;overflow:hidden;"><div class="t" style="position:absolute;left:2.5px;top:6.00px;line-height:12.5px;font-size:12.5px;font-weight:400;color:#000;white-space:nowrap;letter-spacing:0.346px;">Noah Hartmann</div></div>
<div style="position:absolute;left:191px;top:452px;width:91px;height:21px;background:#b4ecca;"></div>
<div style="position:absolute;left:191px;top:452px;width:91px;height:21px;overflow:hidden;"><div class="t" style="position:absolute;left:-500px;width:1091px;text-align:center;top:6.00px;line-height:12.5px;font-size:12.5px;font-weight:400;color:#000;white-space:nowrap;letter-spacing:-0.936px;">Ja</div></div>
<div style="position:absolute;left:283px;top:452px;width:104px;height:21px;overflow:hidden;"><div class="t" style="position:absolute;left:-500px;width:1104px;text-align:center;top:6.00px;line-height:12.5px;font-size:12.5px;font-weight:400;color:#000;white-space:nowrap;letter-spacing:-0.168px;"><span class="d">1</span></div></div>
<div style="position:absolute;left:388px;top:452px;width:64px;height:21px;overflow:hidden;"><div class="t" style="position:absolute;left:-500px;width:1064px;text-align:center;top:6.00px;line-height:12.5px;font-size:12.5px;font-weight:400;color:#000;white-space:nowrap;letter-spacing:-0.168px;"><span class="d">0</span></div></div>
<div style="position:absolute;left:453px;top:452px;width:104px;height:21px;overflow:hidden;"><div class="t" style="position:absolute;left:-500px;width:1104px;text-align:center;top:6.00px;line-height:12.5px;font-size:12.5px;font-weight:400;color:#000;white-space:nowrap;letter-spacing:-0.168px;"><span class="d">2</span></div></div>
<div style="position:absolute;left:558px;top:452px;width:104px;height:21px;overflow:hidden;"><div class="t" style="position:absolute;left:2.5px;top:6.00px;line-height:12.5px;font-size:12.5px;font-weight:400;color:#000;white-space:nowrap;letter-spacing:-0.159px;">+<span class="d">49</span> <span class="d">178</span> <span class="d">5566778</span></div></div>
<div style="position:absolute;left:663px;top:452px;width:171px;height:21px;overflow:hidden;"><div class="t" style="position:absolute;left:2.5px;top:6.00px;line-height:12.5px;font-size:12.5px;font-weight:400;color:#000;white-space:nowrap;letter-spacing:0.352px;">noah.hartmann@example.com</div></div>
<div style="position:absolute;left:0px;top:474px;width:802px;height:22px;background:#b0cbe5;"></div>
<div style="position:absolute;left:0px;top:496px;width:802px;height:1px;background:#d8d8d8;"></div>
<div style="position:absolute;left:32px;top:474px;width:1px;height:22px;background:#d8d8d8;"></div>
<div style="position:absolute;left:190px;top:474px;width:1px;height:22px;background:#d8d8d8;"></div>
<div style="position:absolute;left:282px;top:474px;width:1px;height:22px;background:#d8d8d8;"></div>
<div style="position:absolute;left:387px;top:474px;width:1px;height:22px;background:#d8d8d8;"></div>
<div style="position:absolute;left:452px;top:474px;width:1px;height:22px;background:#d8d8d8;"></div>
<div style="position:absolute;left:557px;top:474px;width:1px;height:22px;background:#d8d8d8;"></div>
<div style="position:absolute;left:662px;top:474px;width:1px;height:22px;background:#d8d8d8;"></div>
<div style="position:absolute;left:0px;top:474px;width:32px;height:22px;overflow:hidden;"><div class="t" style="position:absolute;left:-500px;width:1032px;text-align:center;top:6.00px;line-height:12.5px;font-size:12.5px;font-weight:400;color:#000;white-space:nowrap;letter-spacing:-0.168px;"><span class="d">13</span></div></div>
<div style="position:absolute;left:33px;top:474px;width:157px;height:22px;overflow:hidden;"><div class="t" style="position:absolute;left:2.5px;top:6.00px;line-height:12.5px;font-size:12.5px;font-weight:400;color:#000;white-space:nowrap;letter-spacing:0.287px;">Marie Schulte</div></div>
<div style="position:absolute;left:191px;top:474px;width:91px;height:22px;background:#b4ecca;"></div>
<div style="position:absolute;left:191px;top:474px;width:91px;height:22px;overflow:hidden;"><div class="t" style="position:absolute;left:-500px;width:1091px;text-align:center;top:6.00px;line-height:12.5px;font-size:12.5px;font-weight:400;color:#000;white-space:nowrap;letter-spacing:-0.936px;">Ja</div></div>
<div style="position:absolute;left:283px;top:474px;width:104px;height:22px;overflow:hidden;"><div class="t" style="position:absolute;left:-500px;width:1104px;text-align:center;top:6.00px;line-height:12.5px;font-size:12.5px;font-weight:400;color:#000;white-space:nowrap;letter-spacing:-0.168px;"><span class="d">0</span></div></div>
<div style="position:absolute;left:388px;top:474px;width:64px;height:22px;overflow:hidden;"><div class="t" style="position:absolute;left:-500px;width:1064px;text-align:center;top:6.00px;line-height:12.5px;font-size:12.5px;font-weight:400;color:#000;white-space:nowrap;letter-spacing:-0.168px;"><span class="d">0</span></div></div>
<div style="position:absolute;left:453px;top:474px;width:104px;height:22px;overflow:hidden;"><div class="t" style="position:absolute;left:-500px;width:1104px;text-align:center;top:6.00px;line-height:12.5px;font-size:12.5px;font-weight:400;color:#000;white-space:nowrap;letter-spacing:-0.168px;"><span class="d">1</span></div></div>
<div style="position:absolute;left:558px;top:474px;width:104px;height:22px;overflow:hidden;"><div class="t" style="position:absolute;left:2.5px;top:6.00px;line-height:12.5px;font-size:12.5px;font-weight:400;color:#000;white-space:nowrap;letter-spacing:-0.159px;">+<span class="d">49</span> <span class="d">170</span> <span class="d">9988776</span></div></div>
<div style="position:absolute;left:663px;top:474px;width:171px;height:22px;overflow:hidden;"><div class="t" style="position:absolute;left:2.5px;top:6.00px;line-height:12.5px;font-size:12.5px;font-weight:400;color:#000;white-space:nowrap;letter-spacing:0.292px;">marie.schulte@example.com</div></div>
<div style="position:absolute;left:0px;top:497px;width:802px;height:21px;background:#d9e6f2;"></div>
<div style="position:absolute;left:0px;top:518px;width:802px;height:1px;background:#d8d8d8;"></div>
<div style="position:absolute;left:32px;top:497px;width:1px;height:21px;background:#d8d8d8;"></div>
<div style="position:absolute;left:190px;top:497px;width:1px;height:21px;background:#d8d8d8;"></div>
<div style="position:absolute;left:282px;top:497px;width:1px;height:21px;background:#d8d8d8;"></div>
<div style="position:absolute;left:387px;top:497px;width:1px;height:21px;background:#d8d8d8;"></div>
<div style="position:absolute;left:452px;top:497px;width:1px;height:21px;background:#d8d8d8;"></div>
<div style="position:absolute;left:557px;top:497px;width:1px;height:21px;background:#d8d8d8;"></div>
<div style="position:absolute;left:662px;top:497px;width:1px;height:21px;background:#d8d8d8;"></div>
<div style="position:absolute;left:0px;top:497px;width:32px;height:21px;overflow:hidden;"><div class="t" style="position:absolute;left:-500px;width:1032px;text-align:center;top:6.00px;line-height:12.5px;font-size:12.5px;font-weight:400;color:#000;white-space:nowrap;letter-spacing:-0.168px;"><span class="d">14</span></div></div>
<div style="position:absolute;left:33px;top:497px;width:157px;height:21px;overflow:hidden;"><div class="t" style="position:absolute;left:2.5px;top:6.00px;line-height:12.5px;font-size:12.5px;font-weight:400;color:#000;white-space:nowrap;letter-spacing:0.04px;">Leon König</div></div>
<div style="position:absolute;left:191px;top:497px;width:91px;height:21px;background:#ededed;"></div>
<div style="position:absolute;left:191px;top:497px;width:91px;height:21px;overflow:hidden;"><div class="t" style="position:absolute;left:-500px;width:1091px;text-align:center;top:6.00px;line-height:12.5px;font-size:12.5px;font-weight:400;color:#000;white-space:nowrap;letter-spacing:0.404px;">Offen</div></div>
<div style="position:absolute;left:283px;top:497px;width:104px;height:21px;overflow:hidden;"><div class="t" style="position:absolute;left:-500px;width:1104px;text-align:center;top:6.00px;line-height:12.5px;font-size:12.5px;font-weight:400;color:#000;white-space:nowrap;letter-spacing:-0.168px;"><span class="d">0</span></div></div>
<div style="position:absolute;left:388px;top:497px;width:64px;height:21px;overflow:hidden;"><div class="t" style="position:absolute;left:-500px;width:1064px;text-align:center;top:6.00px;line-height:12.5px;font-size:12.5px;font-weight:400;color:#000;white-space:nowrap;letter-spacing:-0.168px;"><span class="d">0</span></div></div>
<div style="position:absolute;left:453px;top:497px;width:104px;height:21px;overflow:hidden;"><div class="t" style="position:absolute;left:-500px;width:1104px;text-align:center;top:6.00px;line-height:12.5px;font-size:12.5px;font-weight:400;color:#000;white-space:nowrap;letter-spacing:-0.168px;"><span class="d">1</span></div></div>
<div style="position:absolute;left:558px;top:497px;width:104px;height:21px;overflow:hidden;"><div class="t" style="position:absolute;left:2.5px;top:6.00px;line-height:12.5px;font-size:12.5px;font-weight:400;color:#000;white-space:nowrap;letter-spacing:-0.159px;">+<span class="d">49</span> <span class="d">162</span> <span class="d">3344556</span></div></div>
<div style="position:absolute;left:663px;top:497px;width:171px;height:21px;overflow:hidden;"><div class="t" style="position:absolute;left:2.5px;top:6.00px;line-height:12.5px;font-size:12.5px;font-weight:400;color:#000;white-space:nowrap;letter-spacing:0.278px;">leon.koenig@example.com</div></div>
<div style="position:absolute;left:0px;top:513px;width:802px;height:30px;background:#e8e8e8;"></div>
<svg style="position:absolute;left:0;top:513px" width="50" height="30" viewBox="0 513 50 30"><path d="M8 523.3 L3.2 527.4 L8 531.6 M34 523.3 L38.8 527.4 L34 531.6" fill="none" stroke="#8f8f8f" stroke-width="1.2"/></svg>
<div style="position:absolute;left:85px;top:513px;width:80px;height:25px;background:#ffffff;border-radius:5px;"></div>
<div style="position:absolute;left:85px;top:513px;width:80px;height:27px;overflow:hidden;"><div class="" style="position:absolute;left:-500px;width:1080px;text-align:center;top:7.00px;line-height:12.5px;font-size:12.5px;font-weight:700;color:#222;white-space:nowrap;letter-spacing:-0.082px;">Gaesteliste</div></div>
<div style="position:absolute;left:93px;top:534.5px;width:64px;height:2px;background:#1a7a34;"></div>
<div style="position:absolute;left:168.5px;top:520px;width:1px;height:16px;background:#c4c4c4;"></div>
<svg style="position:absolute;left:208px;top:522px" width="12" height="12" viewBox="0 0 12 12"><path d="M6 0.5 V11.5 M0.5 6 H11.5" fill="none" stroke="#444" stroke-width="1.1"/></svg>
<div style="position:absolute;left:0px;top:55px;width:1px;height:458px;background:rgba(0,0,0,0.18);"></div>
<svg style="position:absolute;left:0;top:0" width="802" height="543" viewBox="0 0 802 543"><polygon points="469,543 802,311.5 802,543" fill="#66d9d9"/></svg>
<svg style="position:absolute;left:0;top:0" width="802" height="543" viewBox="0 0 802 543"><text x="0" y="0" transform="matrix(0.34935 0 0 0.43169 614.863 485.600)" font-family="Liberation Sans" font-weight="700" font-size="100" fill="#0b5660">E</text><text x="0" y="0" transform="matrix(0.40037 0 0 0.42399 638.626 485.600)" font-family="Liberation Sans" font-weight="700" font-size="100" fill="#0b5660">x</text><text x="0" y="0" transform="matrix(0.40796 0 0 0.41435 660.006 485.495)" font-family="Liberation Sans" font-weight="700" font-size="100" fill="#0b5660">c</text><text x="0" y="0" transform="matrix(0.42658 0 0 0.41435 683.634 485.495)" font-family="Liberation Sans" font-weight="700" font-size="100" fill="#0b5660">e</text><text x="0" y="0" transform="matrix(0.42361 0 0 0.43460 616.359 523.500)" font-family="Liberation Sans" font-weight="700" font-size="100" fill="#0b5660">W</text><text x="0" y="0" transform="matrix(0.38931 0 0 0.41617 655.479 523.694)" font-family="Liberation Sans" font-weight="700" font-size="100" fill="#0b5660">e</text><path fill="#0b5660" d="M709.2 455.7 H714.9 V477.5 C714.9 479.6 715.9 480.3 717.5 480.3 L718.5 480.3 V485.4 L716.8 485.4 C711.8 485.4 709.2 482.8 709.2 478 Z"/><path fill="#0b5660" d="M679.7 493.5 H684.8 V515.5 C684.8 517.6 685.6 518.3 687 518.3 H687.8 V523.5 H686.2 C681.8 523.5 679.7 521 679.7 516.5 Z"/><path fill="#0b5660" d="M692.2 495.7 H697.3 V502 H701.4 V506.2 H697.3 V515.5 C697.3 517.6 698.1 518.3 699.5 518.3 H700.8 V523.5 H698.7 C694.3 523.5 692.2 521 692.2 516.5 V506.2 H688.5 V502 H692.2 Z"/></svg>
<svg style="position:absolute;left:700px;top:440px" width="102" height="103" viewBox="700 440 102 103">
<defs><clipPath id="gc"><circle cx="759.2" cy="483.4" r="34"/></clipPath>
<mask id="gm"><rect x="700" y="440" width="102" height="103" fill="#fff"/><rect x="700" y="485.2" width="49.6" height="60" fill="#000"/></mask></defs>
<g mask="url(#gm)">
<circle cx="759.2" cy="483.4" r="33.5" fill="none" stroke="#129a9b" stroke-width="3.6"/>
<g clip-path="url(#gc)" stroke="#129a9b" stroke-width="3.4">
<line x1="744.9" y1="440" x2="744.9" y2="530"/><line x1="758.8" y1="440" x2="758.8" y2="530"/><line x1="772.9" y1="440" x2="772.9" y2="530"/>
<line x1="700" y1="466.7" x2="802" y2="466.7"/><line x1="700" y1="482.9" x2="802" y2="482.9"/><line x1="700" y1="499" x2="802" y2="499"/>
</g></g>
<path d="M712.3 490.4 L745 487.3 L745 527.6 L712.3 524.6 Z" fill="#0f7c7d" stroke="#0f7c7d" stroke-width="2.2" stroke-linejoin="round"/>
<path d="M719.5 497.8 L724.6 497.8 L729 505.2 L733.4 497.8 L738.5 497.8 L731.6 508.8 L738.8 520 L733.7 520 L729 512.4 L724.3 520 L719.2 520 L726.4 508.8 Z" fill="#fff"/>
</svg>
</body></html>
